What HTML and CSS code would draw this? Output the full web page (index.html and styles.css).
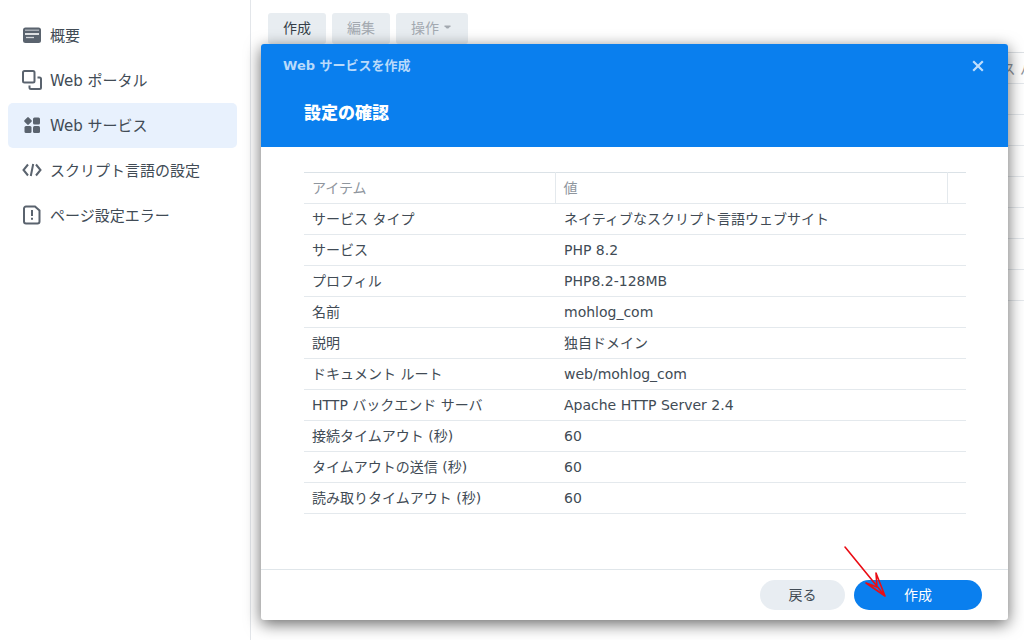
FILE: index.html
```html
<!DOCTYPE html>
<html lang="ja">
<head>
<meta charset="utf-8">
<title>Web サービスを作成</title>
<link rel="stylesheet" href="styles.css">
</head>
<body>
<div class="app">
  <nav class="sidebar">
    <a class="nav-item" href="#">
      <svg class="nav-icon" viewBox="0 0 20 20"><rect x="1" y="2.500" width="18" height="15.500" rx="2.500" fill="#5a636e"/><path d="M3 5.200h14" stroke="#b4b9bf" stroke-width="1.300"/><path d="M3 9h14" stroke="#fff" stroke-width="1.600"/><path d="M4 12.500h8" stroke="#d5d8dc" stroke-width="1.300"/></svg>
      <span>概要</span>
    </a>
    <a class="nav-item" href="#">
      <svg class="nav-icon" viewBox="0 0 20 20" fill="none" stroke="#5a636e" stroke-width="2"><rect x="1" y="1" width="11.5" height="11.5" rx="1.5"/><path d="M15.5 7.5h2a1.5 1.5 0 0 1 1.5 1.5v8.500a1.500 1.500 0 0 1-1.500 1.500h-8.500a1.500 1.500 0 0 1-1.500-1.500v-2"/></svg>
      <span>Web ポータル</span>
    </a>
    <a class="nav-item active" href="#" aria-current="page">
      <svg class="nav-icon" viewBox="0 0 20 20" fill="#5a636e"><rect x="3" y="3" width="6" height="6" rx="1" transform="rotate(45 6 6)"/><rect x="11" y="2.500" width="7" height="7" rx="1.500"/><rect x="2.500" y="11" width="7" height="7" rx="1.500"/><rect x="11" y="11" width="7" height="7" rx="1.500"/></svg>
      <span>Web サービス</span>
    </a>
    <a class="nav-item" href="#">
      <svg class="nav-icon" viewBox="0 0 20 20" fill="none" stroke="#5a636e" stroke-width="2"><path d="M6 4.500L1.500 10L6 15.500M14 4.500L18.500 10L14 15.500M11.200 4L8.800 16"/></svg>
      <span>スクリプト言語の設定</span>
    </a>
    <a class="nav-item" href="#">
      <svg class="nav-icon" viewBox="0 0 20 20" fill="none" stroke="#5a636e" stroke-width="2"><path d="M4 1.500h9l4.500 4v11a2 2 0 0 1-2 2h-11.500a2 2 0 0 1-2-2v-13a2 2 0 0 1 2-2z"/><path d="M10 5v6M10 12.800v2"/></svg>
      <span>ページ設定エラー</span>
    </a>
  </nav>
  <main class="content">
    <div class="toolbar">
      <button class="tool" type="button">作成</button>
      <button class="tool" type="button" disabled>編集</button>
      <button class="tool tool-menu" type="button" disabled>操作<svg class="caret" viewBox="0 0 7 4"><path d="M.5 .5h6v.8L4.300 3.500h-1.600L.5 1.300z" fill="#a3a9b0"/></svg></button>
    </div>
    <div class="grid">
      <div class="grid-row grid-head">ス パ</div>
      <div class="grid-row"></div>
      <div class="grid-row"></div>
      <div class="grid-row"></div>
      <div class="grid-row"></div>
      <div class="grid-row"></div>
      <div class="grid-row"></div>
      <div class="grid-row"></div>
    </div>
  </main>
  <section class="dialog" role="dialog" aria-labelledby="dialog-title">
    <header class="dialog-head">
      <div class="title-bar">
        <h1 class="dialog-title" id="dialog-title">Web サービスを作成</h1>
        <button class="close" type="button" aria-label="閉じる"><svg class="close-icon" viewBox="0 0 12 12"><path d="M1.200 1.200l9.600 9.600M10.800 1.200l-9.600 9.600" stroke="#c0defc" stroke-width="2.200"/></svg></button>
      </div>
      <h2 class="step-title">設定の確認</h2>
    </header>
    <div class="dialog-body">
      <table class="summary">
        <colgroup><col class="col-item"><col><col class="col-end"></colgroup>
        <thead><tr><th>アイテム</th><th>値</th><th></th></tr></thead>
        <tbody>
          <tr><td>サービス タイプ</td><td colspan="2">ネイティブなスクリプト言語ウェブサイト</td></tr>
          <tr><td>サービス</td><td colspan="2">PHP 8.2</td></tr>
          <tr><td>プロフィル</td><td colspan="2">PHP8.2-128MB</td></tr>
          <tr><td>名前</td><td colspan="2">mohlog_com</td></tr>
          <tr><td>説明</td><td colspan="2">独自ドメイン</td></tr>
          <tr><td>ドキュメント ルート</td><td colspan="2">web/mohlog_com</td></tr>
          <tr><td>HTTP バックエンド サーバ</td><td colspan="2">Apache HTTP Server 2.4</td></tr>
          <tr><td>接続タイムアウト (秒)</td><td colspan="2">60</td></tr>
          <tr><td>タイムアウトの送信 (秒)</td><td colspan="2">60</td></tr>
          <tr><td>読み取りタイムアウト (秒)</td><td colspan="2">60</td></tr>
        </tbody>
      </table>
    </div>
    <footer class="dialog-foot">
      <button class="pill" type="button">戻る</button>
      <button class="pill primary" type="button">作成</button>
      <svg class="arrow" viewBox="0 0 44 54" fill="none" stroke="#ea0c14" stroke-width="1.600" stroke-linecap="round" stroke-linejoin="round"><path d="M2 2L42 51M33 28L42 51L23 38L34 42L33 28"/></svg>
    </footer>
  </section>
</div>
</body>
</html>
```
FILE: styles.css
```css
* { box-sizing: border-box; }

body {
  margin: 0;
  font-family: "DejaVu Sans", "Noto Sans CJK JP", sans-serif;
  font-size: 14px;
  color: #414b55;
  background: #fff;
}

button { font: inherit; border: 0; padding: 0; }

.app {
  position: relative;
  display: flex;
  min-height: 100vh;
  overflow: hidden;
}

.sidebar {
  flex: 0 0 251px;
  display: flex;
  flex-direction: column;
  padding: 13px 13px 13px 8px;
  border-right: 1px solid #e3e6ea;
}

.nav-item {
  display: flex;
  align-items: center;
  gap: 8px;
  height: 45px;
  padding: 0 14px 2px;
  border-radius: 5px;
  font-size: 15px;
  color: #414b55;
  text-decoration: none;
  white-space: nowrap;
}

.nav-item.active { background: #e8f1fd; }

.nav-icon { width: 20px; height: 20px; }

.content { flex: 1; min-width: 0; padding: 13px 0 0 17px; }

.toolbar { display: flex; gap: 6px; }

.tool {
  min-width: 58px;
  height: 31px;
  padding: 0 14px 3px;
  border-radius: 3px;
  background: #e8edf1;
  color: #353e48;
}

.tool:disabled { color: #a3a9b0; }

.tool-menu {
  display: flex;
  align-items: center;
  gap: 5px;
  padding: 0 17px 3px 15px;
}

.caret { width: 7px; height: 4px; }

.grid { margin-top: 8px; border-top: 1px solid #dde1e5; }

.grid-row { height: 31px; border-bottom: 1px solid #e4e8ec; }

.grid-head {
  display: flex;
  align-items: center;
  justify-content: flex-end;
  margin-right: -10px;
  color: #8b929a;
}

.dialog {
  position: absolute;
  inset: 44px 16px 20px 261px;
  display: flex;
  flex-direction: column;
  border-radius: 3px;
  background: #fff;
  box-shadow: 0 4px 16px rgba(0, 0, 0, 0.6);
}

.dialog-head {
  padding: 8px 22px 20px 22px;
  border-radius: 3px 3px 0 0;
  background: #0a7fee;
  color: #fff;
}

.title-bar {
  display: flex;
  align-items: center;
  justify-content: space-between;
  height: 27px;
}

.dialog-title {
  margin: 0;
  font-size: 13px;
  font-weight: 700;
  line-height: 20px;
  color: #b8dafb;
}

.close { display: flex; padding: 2px; background: none; }

.close-icon { width: 12px; height: 12px; }

.step-title {
  margin: 20px 0 0 21px;
  font-size: 17px;
  font-weight: 900;
  line-height: 28px;
}

.dialog-body { flex: 1; padding: 25px 42px 0 43px; }

.summary {
  width: 100%;
  table-layout: fixed;
  border-collapse: collapse;
  border-top: 1px solid #dbe2e7;
}

.col-item { width: 251px; }
.col-end { width: 19px; }

.summary th,
.summary td {
  height: 31px;
  padding: 0 8px;
  border-bottom: 1px solid #e4e9ed;
  line-height: 20px;
  text-align: left;
  white-space: nowrap;
}

.summary th { font-weight: 400; color: #8f969e; }

.summary th + th { border-left: 1px solid #e4e9ed; }

.summary td + td { padding-left: 9px; }

.dialog-foot {
  position: relative;
  display: flex;
  justify-content: flex-end;
  gap: 9px;
  padding: 10px 26px;
  border-top: 1px solid #e0e6ea;
}

.pill {
  width: 85px;
  height: 30px;
  padding-bottom: 2px;
  border-radius: 15px;
  background: #e8edf2;
  color: #414b55;
}

.pill.primary { width: 128px; background: #0a7fee; color: #fff; }

.arrow {
  position: absolute;
  right: 121px;
  bottom: 21px;
  width: 44px;
  height: 54px;
  pointer-events: none;
}
```
